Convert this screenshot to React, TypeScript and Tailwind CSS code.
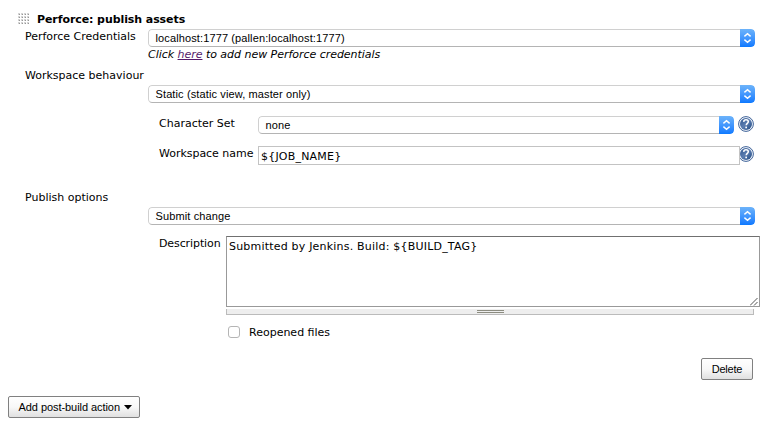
import React from "react";

const verdana = "font-['Verdana','DejaVu_Sans',sans-serif]";
const arial = "font-['Liberation_Sans',Arial,sans-serif]";

function Select({ value, className }: { value: string; className: string }) {
  return (
    <div
      className={`${arial} flex h-[18px] shrink-0 overflow-hidden rounded-[4px] bg-white text-[11px] leading-[18px] tracking-[0.12px] ${className}`}
    >
      <div className="flex-1 rounded-l-[4px] border border-r-0 border-[#d0d0d0] border-b-[#b4b4b4] pl-[6.5px] leading-[17px]">
        {value}
      </div>
      <div className="flex w-[15px] items-center justify-center rounded-r-[4px] bg-gradient-to-b from-[#6cb3fa] to-[#0a79ff]">
        <svg width="15" height="18" viewBox="0 0 15 18" fill="none" stroke="white" strokeWidth="1.4">
          <path d="M4.4 7.4 7.5 4.7l3.1 2.7M4.4 10.6l3.1 2.7 3.1-2.7" />
        </svg>
      </div>
    </div>
  );
}

function HelpIcon({ className }: { className: string }) {
  return (
    <svg className={`shrink-0 ${className}`} width="16" height="16" viewBox="0 0 16 16">
      <defs>
        <linearGradient id="help" x1="0" y1="0" x2="1" y2="1">
          <stop offset="0" stopColor="#2f568f" />
          <stop offset="0.5" stopColor="#5b7db0" />
          <stop offset="1" stopColor="#204880" />
        </linearGradient>
      </defs>
      <circle cx="8" cy="8" r="7.4" fill="#f4f8fd" stroke="#3f6298" strokeWidth="1" />
      <circle cx="8" cy="8" r="6" fill="url(#help)" />
      <path
        d="M5.7 5.9C5.8 4.4 6.7 3.8 8 3.8s2.3.8 2.3 1.9c0 1.6-2.1 1.8-2.1 3.6"
        fill="none"
        stroke="white"
        strokeWidth="1.5"
      />
      <rect x="7.3" y="10.6" width="1.7" height="1.7" fill="white" />
    </svg>
  );
}

function DragHandle() {
  const cells = [0, 1, 2, 3];
  return (
    <svg width="12" height="12" viewBox="0 0 12 12" shapeRendering="crispEdges">
      {cells.map((r) =>
        cells.map((c) => (
          <React.Fragment key={`${r}-${c}`}>
            <rect x={c * 3} y={r * 3} width="2" height="2" fill="#d4d4d4" />
            <rect x={c * 3 + 1} y={r * 3 + 1} width="1" height="1" fill="#969696" />
          </React.Fragment>
        )),
      )}
    </svg>
  );
}

export default function App() {
  return (
    <div className={`${verdana} h-[429px] w-[776px] overflow-hidden bg-white text-[11px] leading-[14px] text-black`}>
      <div className="flex h-[29px] pl-[18px] pt-[13px]">
        <DragHandle />
        <b className="ml-[7px] whitespace-nowrap tracking-[-0.08px]">Perforce: publish assets</b>
      </div>

      <div className="flex h-[18px] pl-[25px]">
        <span className="w-[123px] whitespace-nowrap pt-px tracking-[-0.02px]">Perforce Credentials</span>
        <Select value="localhost:1777 (pallen:localhost:1777)" className="w-[607px]" />
      </div>
      <div className="h-[21px] pl-[148px] pt-px italic tracking-[-0.03px]">
        Click <a className="text-[#551a6b] underline">here</a> to add new Perforce credentials
      </div>

      <div className="h-[17px] pl-[25px] pt-px">Workspace behaviour</div>
      <div className="flex h-[31px] pl-[148px]">
        <Select value="Static (static view, master only)" className="w-[607px]" />
      </div>

      <div className="flex h-[30px] pl-[159px]">
        <span className="w-[99px] whitespace-nowrap pt-px">Character Set</span>
        <Select value="none" className="w-[476px]" />
        <HelpIcon className="ml-1" />
      </div>
      <div className="flex h-[44px] pl-[159px]">
        <span className="w-[99px] whitespace-nowrap pt-px tracking-[-0.03px]">Workspace name</span>
        <div className="z-10 h-[19px] w-[482px] shrink-0 border border-[#c3c3c3] bg-white pl-[2px] leading-[19px] tracking-[0.2px]">
          {"${JOB_NAME}"}
        </div>
        <HelpIcon className="-ml-0.5" />
      </div>

      <div className="h-[17px] pl-[25px] pt-px">Publish options</div>
      <div className="flex h-[29px] pl-[148px]">
        <Select value="Submit change" className="w-[607px]" />
      </div>

      <div className="flex h-[90px] pl-[159px]">
        <span className="w-[67px] whitespace-nowrap pt-px tracking-[-0.1px]">Description</span>
        <div className="w-[534px]">
          <div className="flex h-[71px] justify-between border border-[#999] border-t-[#707070] pl-[2px] pt-[3px]">
            <span className="tracking-[0.2px]">{"Submitted by Jenkins. Build: ${BUILD_TAG}"}</span>
            <svg className="mr-px self-end" width="8" height="8" viewBox="0 0 8 8" stroke="#555" strokeWidth="1">
              <path d="M0 7.5 7.5 0M4 7.5 7.5 4" fill="none" />
            </svg>
          </div>
          <div className="mt-[2px] flex h-[6px] w-[528px] justify-center border-x border-b border-[#bbb] bg-[#eee] pt-px">
            <div className="h-[3px] w-[27px] border-y border-[#8c8c80]" />
          </div>
        </div>
      </div>

      <div className="flex h-[32px] pl-[228px]">
        <span className="h-3 w-3 rounded-[3px] border border-[#b5b5b5] bg-white" />
        <span className="ml-[9px]">Reopened files</span>
      </div>

      <div className={`${arial} flex h-[38px] justify-end pr-[23px]`}>
        <button className="h-[22px] w-[52px] rounded-[2px] border border-[#808080] bg-gradient-to-b from-white via-[#f8f8f8] to-[#e0e0e0] tracking-[-0.2px]">
          Delete
        </button>
      </div>
      <div className={`${arial} pl-2`}>
        <button className="flex h-[22px] w-[132px] items-center gap-[4px] whitespace-nowrap rounded-[2px] border border-[#808080] bg-gradient-to-b from-white via-[#f8f8f8] to-[#e0e0e0] pl-[9.5px] tracking-[-0.06px]">
          Add post-build action
          <svg width="8" height="5" viewBox="0 0 8 5">
            <path d="M0 0h8L4 4.5z" />
          </svg>
        </button>
      </div>
    </div>
  );
}
